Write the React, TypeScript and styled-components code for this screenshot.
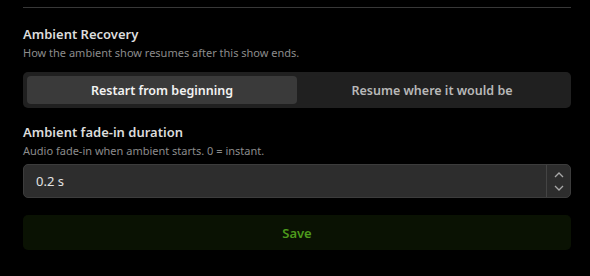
import React, { useState } from "react";
import styled, { createGlobalStyle } from "styled-components";

const Global = createGlobalStyle`
  html, body { margin: 0; padding: 0; background: #000; }
  body { font-family: "Noto Sans", "Open Sans", sans-serif; }
  * { box-sizing: border-box; }
`;

const Panel = styled.div`
  width: 590px;
  height: 276px;
  padding: 7px 19px 0 23px;
  background: #000;
  display: flex;
  flex-direction: column;
`;

const Divider = styled.div`
  height: 1px;
  background: #383838;
  margin-bottom: 17px;
`;

const Field = styled.div<{ $gap: number }>`
  display: flex;
  flex-direction: column;
  margin-bottom: ${(p) => p.$gap}px;
`;

const Title = styled.div`
  font-size: 13px;
  line-height: 18px;
  font-weight: 600;
  color: #dcdcdc;
`;

const Hint = styled.div<{ $after: number }>`
  font-size: 11px;
  line-height: 15px;
  color: #8c8c8c;
  margin-top: 2px;
  margin-bottom: ${(p) => p.$after}px;
`;

const Segmented = styled.div`
  display: grid;
  grid-template-columns: 1fr 1fr;
  height: 36px;
  padding: 4px;
  background: #202020;
  border-radius: 5px;
`;

const Segment = styled.button<{ $active: boolean }>`
  border: none;
  border-radius: 4px;
  font-family: inherit;
  font-size: 12.5px;
  font-weight: 600;
  color: ${(p) => (p.$active ? "#f2f2f2" : "#b8b8b8")};
  background: ${(p) => (p.$active ? "#3a3a3a" : "transparent")};
  cursor: pointer;
`;

const InputWrap = styled.div`
  display: flex;
  height: 34px;
  background: #2d2d2d;
  border: 1px solid #3c3c3c;
  border-radius: 5px;
  overflow: hidden;
`;

const Input = styled.input`
  flex: 1;
  min-width: 0;
  border: none;
  outline: none;
  background: transparent;
  padding: 0 12px;
  font-family: inherit;
  font-size: 13px;
  color: #e2e2e2;
`;

const Spinner = styled.div`
  width: 24px;
  border-left: 1px solid #444;
  display: flex;
  flex-direction: column;
  align-items: center;
  justify-content: space-between;
  padding: 6px 0 5px;
`;

const SaveButton = styled.button`
  margin-top: 17px;
  height: 35px;
  border: none;
  border-radius: 5px;
  background: #0a1203;
  color: #4d9a1c;
  font-family: inherit;
  font-size: 13px;
  font-weight: 600;
`;

const Chevron = ({ up }: { up?: boolean }) => (
  <svg width="10" height="7" viewBox="0 0 10 7">
    <path
      d={up ? "M1 6 L5 2 L9 6" : "M1 1 L5 5 L9 1"}
      fill="none"
      stroke="#a8a8a8"
      strokeWidth="1.3"
    />
  </svg>
);

export default function App() {
  const [mode, setMode] = useState(0);
  return (
    <>
      <Global />
      <Panel>
        <Divider />
        <Field $gap={15}>
          <Title>Ambient Recovery</Title>
          <Hint $after={12}>How the ambient show resumes after this show ends.</Hint>
          <Segmented>
            <Segment $active={mode === 0} onClick={() => setMode(0)}>
              Restart from beginning
            </Segment>
            <Segment $active={mode === 1} onClick={() => setMode(1)}>
              Resume where it would be
            </Segment>
          </Segmented>
        </Field>
        <Field $gap={0}>
          <Title>Ambient fade-in duration</Title>
          <Hint $after={6}>Audio fade-in when ambient starts. 0 = instant.</Hint>
          <InputWrap>
            <Input defaultValue="0.2 s" />
            <Spinner>
              <Chevron up />
              <Chevron />
            </Spinner>
          </InputWrap>
        </Field>
        <SaveButton>Save</SaveButton>
      </Panel>
    </>
  );
}
